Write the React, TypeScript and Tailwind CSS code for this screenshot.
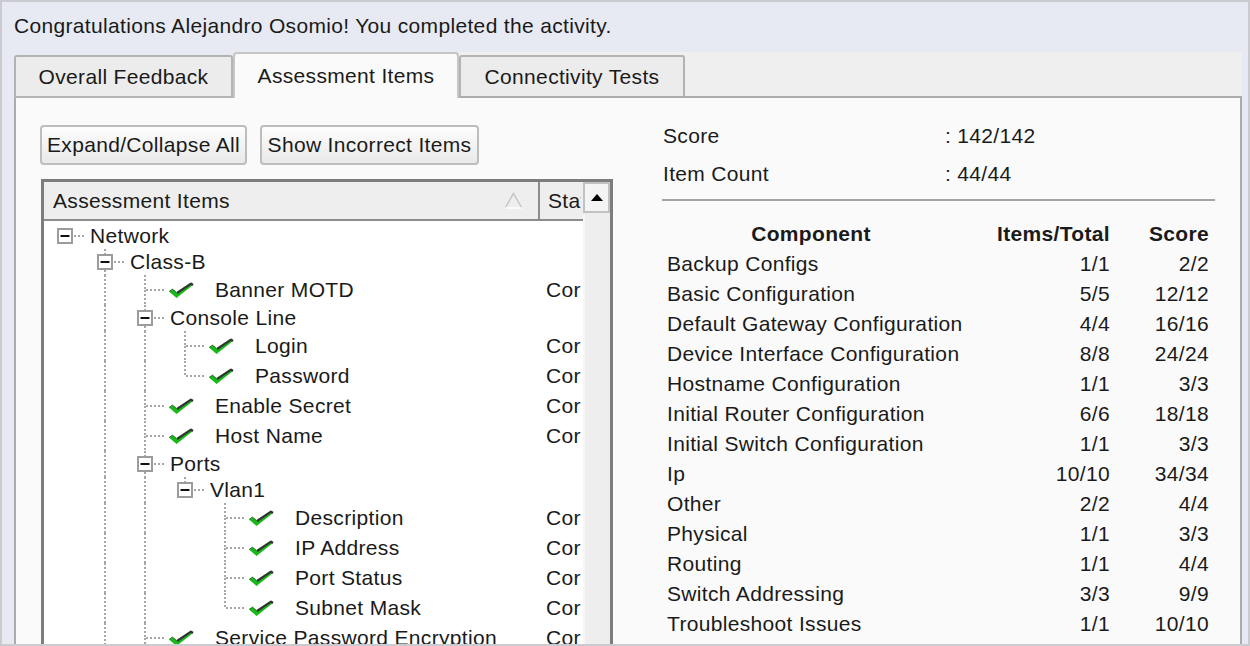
import React from "react";

type TreeNode = {
  label: string;
  depth: number;
  folder?: boolean;
  guides: number[];
  last?: boolean;
  root?: boolean;
};

const treeRows: TreeNode[] = [
  { label: "Network", depth: 0, folder: true, guides: [], root: true },
  { label: "Class-B", depth: 1, folder: true, guides: [] },
  { label: "Banner MOTD", depth: 2, guides: [1] },
  { label: "Console Line", depth: 2, folder: true, guides: [1] },
  { label: "Login", depth: 3, guides: [1, 2] },
  { label: "Password", depth: 3, guides: [1, 2], last: true },
  { label: "Enable Secret", depth: 2, guides: [1] },
  { label: "Host Name", depth: 2, guides: [1] },
  { label: "Ports", depth: 2, folder: true, guides: [1] },
  { label: "Vlan1", depth: 3, folder: true, guides: [1, 2], last: true },
  { label: "Description", depth: 4, guides: [1, 2] },
  { label: "IP Address", depth: 4, guides: [1, 2] },
  { label: "Port Status", depth: 4, guides: [1, 2] },
  { label: "Subnet Mask", depth: 4, guides: [1, 2], last: true },
  { label: "Service Password Encryption", depth: 2, guides: [1] },
  { label: "Switch Ports", depth: 2, folder: true, guides: [1] },
];

const components = [
  ["Backup Configs", "1/1", "2/2"],
  ["Basic Configuration", "5/5", "12/12"],
  ["Default Gateway Configuration", "4/4", "16/16"],
  ["Device Interface Configuration", "8/8", "24/24"],
  ["Hostname Configuration", "1/1", "3/3"],
  ["Initial Router Configuration", "6/6", "18/18"],
  ["Initial Switch Configuration", "1/1", "3/3"],
  ["Ip", "10/10", "34/34"],
  ["Other", "2/2", "4/4"],
  ["Physical", "1/1", "3/3"],
  ["Routing", "1/1", "4/4"],
  ["Switch Addressing", "3/3", "9/9"],
  ["Troubleshoot Issues", "1/1", "10/10"],
];

const DOT = "#a6a6a6";

const Guide = ({ h, on }: { h: number; on: boolean }) => (
  <svg width={40} height={h} className="shrink-0">
    {on && <line x1={20} y1={0} x2={20} y2={h} stroke={DOT} strokeWidth={2} strokeDasharray="2 2" />}
  </svg>
);

const Connector = ({ node, h }: { node: TreeNode; h: number }) => {
  const cy = h / 2;
  return (
    <svg width={40} height={h} className="shrink-0">
      {!node.root && <line x1={20} y1={0} x2={20} y2={cy} stroke={DOT} strokeWidth={2} strokeDasharray="2 2" />}
      {!node.root && !node.last && (
        <line x1={20} y1={cy} x2={20} y2={h} stroke={DOT} strokeWidth={2} strokeDasharray="2 2" />
      )}
      <line x1={node.folder ? 29 : 21} y1={cy} x2={40} y2={cy} stroke={DOT} strokeWidth={2} strokeDasharray="2 2" />
      {node.folder && (
        <>
          <rect x={13} y={cy - 7} width={14} height={14} fill="#ffffff" stroke="#9c9c9c" strokeWidth={2} />
          <line x1={15.5} y1={cy} x2={24.5} y2={cy} stroke="#111" strokeWidth={2} />
        </>
      )}
    </svg>
  );
};

// green tick with the dark upper stroke, as in the original tree
const Check = () => (
  <svg width={26} height={17} viewBox="0 0 26 17" className="shrink-0">
    <path d="M1 9.5 L4.5 7 L8.5 10.5 L22.5 1 L25 3 L8.5 16 Z" fill="#19b919" />
    <path d="M9 11 L23 1.6 L25 3" fill="none" stroke="#333" strokeWidth={2.2} strokeLinejoin="round" />
    <path d="M1.2 9.4 L4.5 7.2 L8.5 10.6" fill="none" stroke="#2b6f2b" strokeWidth={1} />
  </svg>
);

const TreeRow = ({ node }: { node: TreeNode }) => {
  const h = node.folder ? 26 : 30;
  const guides = [];
  for (let k = 0; k < node.depth; k++) guides.push(<Guide key={k} h={h} on={node.guides.includes(k)} />);
  return (
    <div className={`flex items-center ${node.folder ? "h-[26px]" : "h-[30px]"}`}>
      <div className="flex items-center w-[496px] pl-[1px] shrink-0">
        {guides}
        <Connector node={node} h={h} />
        {node.folder ? (
          <span className="ml-[5px] whitespace-nowrap">{node.label}</span>
        ) : (
          <>
            <span className="ml-[3px]">
              <Check />
            </span>
            <span className="ml-[21px] whitespace-nowrap">{node.label}</span>
          </>
        )}
      </div>
      <div className="w-[41px] pl-[6px] overflow-hidden whitespace-nowrap shrink-0">
        {!node.folder && "Correct"}
      </div>
    </div>
  );
};

export default function App() {
  return (
    <div className="w-[1250px] h-[646px] border-2 border-[#c9cbd0] bg-[#e7eaf2] overflow-hidden flex flex-col font-['Liberation_Sans',Arial,sans-serif] text-[21px] tracking-[0.33px] leading-[24px] text-[#1a1a1a]">
      <div className="h-[50px] flex items-center pl-[12px] pb-[2px] shrink-0">
        Congratulations Alejandro Osomio! You completed the activity.
      </div>

      <div className="ml-[12px] mr-[6px] h-[46px] flex items-end shrink-0">
        <div className="w-[219px] h-[43px] bg-[#ececec] border-2 border-[#b3b3b3] rounded-t-[3px] flex items-center justify-center shrink-0">
          Overall Feedback
        </div>
        <div className="w-[226px] h-[46px] bg-[#fafafa] border-2 border-b-0 border-[#c6c6c6] rounded-t-[4px] flex items-center justify-center pb-[1px] shrink-0">
          Assessment Items
        </div>
        <div className="flex-1 h-[46px] bg-[#efefef] border-b-2 border-[#acacac] flex items-end">
          <div className="w-[226px] h-[41px] bg-[#ececec] border-2 border-b-0 border-[#b3b3b3] rounded-t-[3px] flex items-center justify-center shrink-0">
            Connectivity Tests
          </div>
        </div>
      </div>

      <div className="ml-[12px] mr-[6px] flex-1 min-h-0 bg-[#fafafa] border-x-2 border-[#acacac] flex overflow-hidden">
        <div className="w-[597px] shrink-0 pl-[24px] pt-[27px] flex flex-col">
          <div className="flex gap-[13px]">
            <button className="h-[40px] w-[207px] rounded-[4px] border-2 border-[#bdbdbd] bg-gradient-to-b from-[#fdfdfd] to-[#e9e9e9] text-[#1a1a1a] tracking-[0.33px]">
              Expand/Collapse All
            </button>
            <button className="h-[40px] w-[219px] rounded-[4px] border-2 border-[#bdbdbd] bg-gradient-to-b from-[#fdfdfd] to-[#e9e9e9] text-[#1a1a1a] tracking-[0.33px]">
              Show Incorrect Items
            </button>
          </div>

          <div className="mt-[14px] ml-[1px] w-[572px] h-[520px] shrink-0 border-[3px] border-[#7d7d7d] bg-white flex">
            <div className="flex-1 min-w-0 flex flex-col">
              <div className="h-[39px] bg-[#eeeeee] border-b-2 border-[#8c8c8c] flex shrink-0">
                <div className="w-[494px] pl-[9px] pr-[15px] flex items-center justify-between shrink-0">
                  <span>Assessment Items</span>
                  <svg width={19} height={17} viewBox="0 0 19 17">
                    <path d="M1.5 15.5 L9.5 1.5 L17.5 15.5" fill="none" stroke="#c4c4c4" strokeWidth={1.4} />
                    <path d="M1.5 16 L17.5 16" stroke="#ffffff" strokeWidth={1.4} />
                  </svg>
                </div>
                <div className="w-[2px] bg-[#8c8c8c] shrink-0" />
                <div className="w-[41px] pl-[8px] flex items-center overflow-hidden whitespace-nowrap shrink-0">Status</div>
              </div>
              <div className="pt-[2px]">
                {treeRows.map((r) => (
                  <TreeRow key={r.label} node={r} />
                ))}
              </div>
            </div>
            <div className="w-[27px] shrink-0 bg-[#eeeeee] flex flex-col">
              <div className="h-[31px] border-2 border-[#c2c2c2] bg-[#f4f4f4] flex items-center justify-center">
                <svg width={12} height={7} viewBox="0 0 12 7">
                  <path d="M0 7 L6 0 L12 7 Z" fill="#000" />
                </svg>
              </div>
              <div className="flex-1 mt-[2px] border-l-2 border-[#f7f7f7]" />
            </div>
          </div>
        </div>

        <div className="ml-[49px] w-[553px] shrink-0 pt-[19px]">
          <div className="h-[38px] flex items-center">
            <span className="w-[283px] pl-[1px]">Score</span>
            <span>: 142/142</span>
          </div>
          <div className="h-[38px] flex items-center">
            <span className="w-[283px] pl-[1px]">Item Count</span>
            <span>: 44/44</span>
          </div>
          <div className="mt-[6px] h-[2px] bg-[#a4a4a4]" />
          <div className="mt-[18px] grid grid-cols-[298px_150px_99px]">
            <div className="h-[30px] flex items-center justify-center font-bold">Component</div>
            <div className="h-[30px] flex items-center justify-end font-bold">Items/Total</div>
            <div className="h-[30px] flex items-center justify-end font-bold">Score</div>
            {components.map(([name, items, score]) => (
              <React.Fragment key={name}>
                <div className="h-[30px] flex items-center pl-[5px] whitespace-nowrap">{name}</div>
                <div className="h-[30px] flex items-center justify-end">{items}</div>
                <div className="h-[30px] flex items-center justify-end">{score}</div>
              </React.Fragment>
            ))}
          </div>
        </div>
      </div>
    </div>
  );
}
